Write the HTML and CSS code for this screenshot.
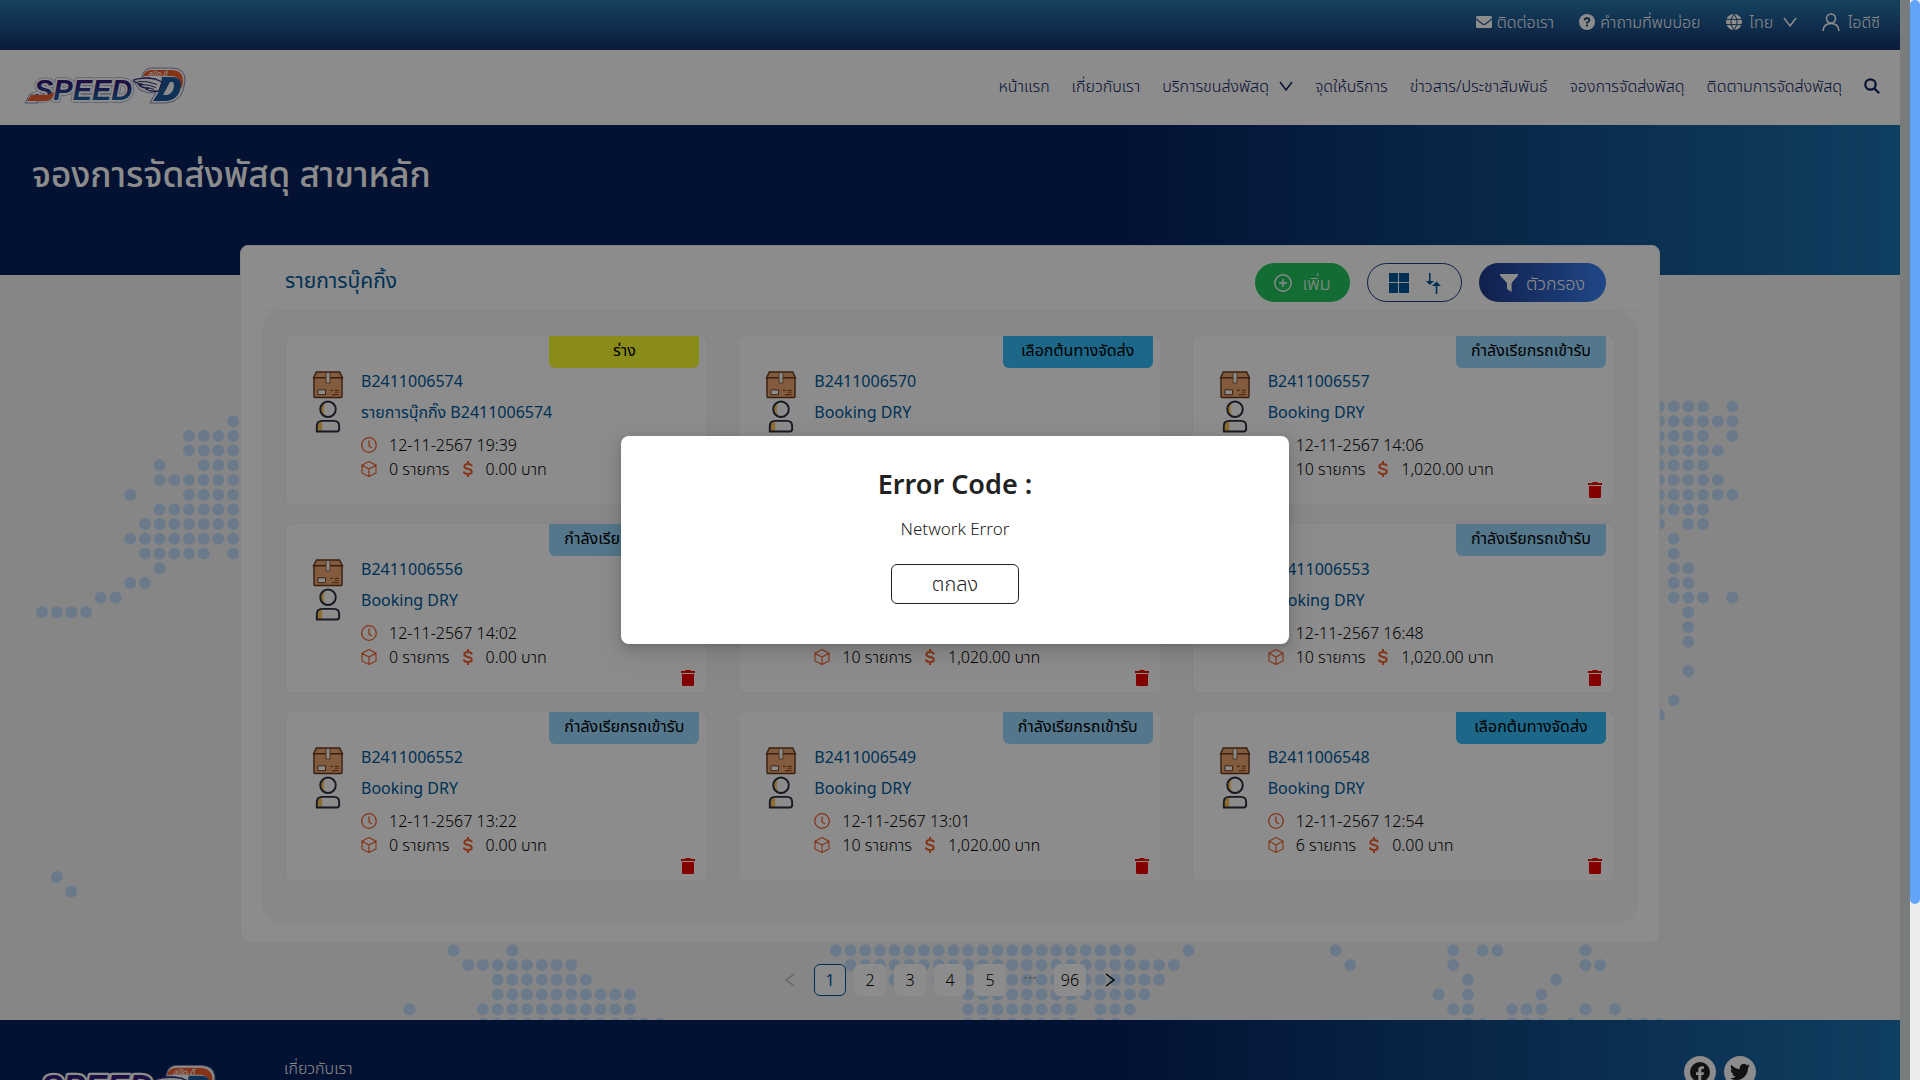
FILE: index.html
```html
<!DOCTYPE html>
<html lang="th">
<head>
<meta charset="utf-8">
<meta name="viewport" content="width=device-width, initial-scale=1">
<title>จองการจัดส่งพัสดุ</title>
<link rel="stylesheet" href="styles.css">
</head>
<body>
<svg class="sprite" aria-hidden="true">
  <symbol id="mail" viewBox="0 0 16 16"><path fill="currentColor" d="M1.500 2h13A1.500 1.500 0 0 1 16 3.500v.7L9 9.500q-1 .7-2 0L0 4.200v-.7A1.500 1.500 0 0 1 1.500 2ZM0 5.800l6.300 4.700q1.700 1.200 3.400 0L16 5.800V12.500a1.500 1.500 0 0 1-1.500 1.500h-13A1.500 1.500 0 0 1 0 12.500Z"/></symbol>
  <symbol id="help" viewBox="0 0 16 16"><circle cx="8" cy="8" r="8" fill="currentColor"/><path fill="none" stroke="#17385c" stroke-width="1.700" d="M5.500 6.400Q5.600 4.200 8 4.200q2.400.1 2.500 2.100Q10.400 7.600 8 8.500v1"/><circle cx="8" cy="11.600" r="1.100" fill="#17385c"/></symbol>
  <symbol id="globe" viewBox="0 0 16 16"><circle cx="8" cy="8" r="8" fill="currentColor"/><path fill="none" stroke="#1c4f80" stroke-width="1" d="M0 5.400h16M0 10.600h16M8 0Q1.800 8 8 16M8 0q6.200 8 0 16"/></symbol>
  <symbol id="down" viewBox="0 0 14 14"><path fill="none" stroke="currentColor" stroke-width="1.500" d="M1 3l6 8 6-8"/></symbol>
  <symbol id="person" viewBox="0 0 18 18"><g fill="none" stroke="currentColor" stroke-width="1.600"><circle cx="9" cy="5.500" r="4.500"/><path d="M1 18q.5-7.500 8-7.500t8 7.500"/></g></symbol>
  <symbol id="search" viewBox="0 0 16 16"><g fill="none" stroke="currentColor" stroke-width="2.200"><circle cx="6.500" cy="6.500" r="5.200"/><path d="M10.200 10.200l5 5"/></g></symbol>
  <symbol id="plus" viewBox="0 0 18 18"><g fill="none" stroke="currentColor" stroke-width="1.400"><circle cx="9" cy="9" r="8.200"/><path d="M9 5v8M5 9h8"/></g></symbol>
  <symbol id="grid" viewBox="0 0 20 20"><path fill="currentColor" d="M0 0h9v9H0zM10 0h10v9H10zM0 10h9v10H0zM10 10h10v10H10z"/></symbol>
  <symbol id="sort" viewBox="0 0 15 22"><path fill="currentColor" d="M3 1h1.600v8H8L3.800 13 0 9h3zM9.700 22h1.600v-8H15l-4.500-4.500L6 14h3.700z"/></symbol>
  <symbol id="funnel" viewBox="0 0 18 18"><path fill="currentColor" d="M0 0h18v1.500L11.600 9v9L7 15V9L0 1.500z"/></symbol>
  <symbol id="parcel" viewBox="0 0 32 30"><path d="M4 1h24l3 6H1z" fill="#eaa670" stroke="#6b3a1e" stroke-width="1.500"/><path d="M1.500 7h29v19q0 1.500-1.500 1.500H3Q1.500 27.500 1.500 26z" fill="#eea873" stroke="#6b3a1e" stroke-width="1.500"/><path d="M14 1.500h4v11h-4z" fill="#fff" stroke="#8e5c34" stroke-width="1"/><path d="M5.500 19.500h8v5h-8z" fill="#fff" stroke="#6b3a1e"/><path d="M18 20h3m2 0h4M23 22h4m-7 2.500h7" stroke="#9b4a22" stroke-width="1.200" fill="none"/></symbol>
  <symbol id="avatar" viewBox="0 0 26 34"><path d="M10 2.500Q5 4.500 5 9.500T10 16q-3-6 0-13.500M7 22q-5 0-5 5v5h5z" fill="#ffc95c"/><g fill="none" stroke="#2b303f" stroke-width="2"><ellipse cx="13" cy="9.500" rx="8" ry="8"/><path d="M1.500 32.500V27q0-5.500 5.500-5.500h12q5.500 0 5.500 5.500v3q0 2.500-2.500 2.500z"/></g></symbol>
  <symbol id="clock" viewBox="0 0 16 16"><g fill="none" stroke="currentColor" stroke-width="1.300"><circle cx="8" cy="8" r="7.300"/><path d="M8 3.500V9l3 2"/></g></symbol>
  <symbol id="cube" viewBox="0 0 16 16"><path fill="none" stroke="currentColor" stroke-width="1.100" d="M8 .6l7 3.600v7.800l-7 3.500-7-3.500V4.200zM1 4.200l7 3.800 7-3.800M8 8v7.500"/></symbol>
  <symbol id="dollar" viewBox="0 0 10 16"><path fill="none" stroke="currentColor" stroke-width="2" d="M5 0v3M5 13v3M9 5.200Q8.300 3 5 3T1.300 5.300Q1.300 7.300 5 8t3.800 2.700Q8.700 13 5 13T.7 10.500"/></symbol>
  <symbol id="trash" viewBox="0 0 14 16"><path fill="currentColor" d="M0 1h4l1-1h4l1 1h4v2H0zM1 4h12v10.500Q13 16 11.500 16h-9Q1 16 1 14.500z"/></symbol>
  <symbol id="facebook" viewBox="0 0 20 20"><circle cx="10" cy="10" r="10" fill="#222"/><path fill="#fff" d="M8.300 20v-7H6v-2.800h2.300V8q0-3.700 3.700-3.700l2 .2v2.300h-1.200q-1.500 0-1.500 1.500v1.900h2.600L13.400 13h-2.100v7z"/></symbol>
  <symbol id="twitter" viewBox="0 0 24 24"><path fill="#222" d="M23.950 4.570a10 10 0 0 1-2.820.77 4.960 4.960 0 0 0 2.160-2.720c-.95.550-2 .95-3.130 1.180a4.920 4.920 0 0 0-8.380 4.480C7.690 8.090 4.070 6.130 1.640 3.160a4.820 4.820 0 0 0-.67 2.480c0 1.710.87 3.210 2.190 4.100a4.900 4.900 0 0 1-2.230-.62v.06a4.920 4.920 0 0 0 3.950 4.830 5 5 0 0 1-2.210.08 4.940 4.940 0 0 0 4.600 3.420A9.870 9.870 0 0 1 0 19.540a13.990 13.990 0 0 0 7.550 2.210c9.050 0 14-7.500 14-13.980 0-.21 0-.42-.02-.63a9.940 9.940 0 0 0 2.460-2.550z"/></symbol>
  <symbol id="wing-d" viewBox="0 0 162 38">
    <path d="M118 10q2-9 9-9h21q13 0 13 12-1 22-19 23h-16l6-11-8 1-8-3-7-9 10-3h8z" fill="#fff" stroke="#8a8cb8" stroke-width="1" stroke-linejoin="round"/>
    <path d="M119 9q2-6 8-6h20q12 0 12 11 0 5-2 8 1-12-9-13z" fill="#f1602c"/>
    <path fill-rule="evenodd" d="M138 10h10q9 0 9 8-1 14-14 16h-14l7-11zM146 15l-7 13h4q6-1 7-9 0-4-2-4z" fill="#1d5a9b"/>
    <path d="M109 13q10-3 22-1l7 3-3 9q-9 1-13-2l3-1q-7 0-10-3l4-.5q-6-.5-10-4.500" fill="#fff" stroke="#2b2f78" stroke-width="1.300"/>
    <path d="M114 14.500q9-1 19 3M118 17.500q7 0 14 3M123 21q4 0 7 1.500" stroke="#2b2f78" fill="none"/>
  </symbol>
</svg>

<div class="screen">
  <div class="page">
    <div class="topbar">
      <a href="#"><svg class="i16"><use href="#mail"/></svg>ติดต่อเรา</a>
      <a href="#"><svg class="i16"><use href="#help"/></svg>คำถามที่พบบ่อย</a>
      <button type="button" class="lang"><svg class="i16"><use href="#globe"/></svg>ไทย<svg class="i14"><use href="#down"/></svg></button>
      <a href="#" class="account"><svg class="i18"><use href="#person"/></svg>ไอดีซี</a>
    </div>
    <header class="navbar">
      <a href="#" class="brand" aria-label="Speed-D">
        <svg class="brand-logo" viewBox="0 0 162 38">
          <defs><linearGradient id="ink" x1="0" y1="0" x2="0" y2="1"><stop offset=".3" stop-color="#321b78"/><stop offset=".9" stop-color="#1a6fae"/></linearGradient></defs>
          <path d="M1 36l5-9h12l-4 9z" fill="#fff" stroke="#8a8cb8"/>
          <text x="10" y="33" class="logo-word logo-edge">SPEED</text>
          <text x="10" y="33" class="logo-word logo-rim">SPEED</text>
          <text x="10" y="33" class="logo-word" fill="url(#ink)">SPEED</text>
          <path d="M3 34l4-6h16l7-3q0 8-8 9z" fill="#f1602c"/>
          <use href="#wing-d"/>
          <text x="124" y="9" class="logo-tag">สปีด-ดี</text>
        </svg>
      </a>
      <nav>
        <a href="#">หน้าแรก</a>
        <a href="#">เกี่ยวกับเรา</a>
        <a href="#">บริการขนส่งพัสดุ<svg class="i14"><use href="#down"/></svg></a>
        <a href="#">จุดให้บริการ</a>
        <a href="#">ข่าวสาร/ประชาสัมพันธ์</a>
        <a href="#">จองการจัดส่งพัสดุ</a>
        <a href="#">ติดตามการจัดส่งพัสดุ</a>
        <button type="button" aria-label="ค้นหา"><svg class="i16"><use href="#search"/></svg></button>
      </nav>
    </header>
    <div class="banner"><h1>จองการจัดส่งพัสดุ สาขาหลัก</h1></div>

    <main>
      <svg class="dots" viewBox="0 0 1900 745" preserveAspectRatio="xMidYMin slice" aria-hidden="true">
        <path transform="translate(42 131.500) scale(14.700)" d="M13 1h.1M10 2h3.100M10 3h3.100M8 4h.1M11 4h2.100M8 5h5.100M6 6h.1M10 6h3.100M8 7h5.100M7 8h6.100M6 9h7.100M7 10h4.100M13 10h.1M8 11h.1M6 12h1.100M4 13h1.100M0 14h3.100M1 32h.1M2 33h.1
        M110 0h3.100M115 0h.1M110 1h5.100M110 2h3.100M115 2h.1M110 3h4.100M110 4h3.100M110 5h4.100M110 6h5.100M110 7h3.100M110 8h.1M112 8h1.100M111 9h.1M111 10h.1M111 11h1.100M111 12h1.100M111 13h2.100M115 13h.1M112 14h.1M112 15h.1M112 16h.1M112 18h.1M111 20h.1M110 21h.1
        M28 37h.1M32 37h.1M29 38h7.100M31 39h6.100M31 40h9.100M25 41h.1M30 41h10.100M30 42h12.100
        M54 37h20.100M78 37h.1M55 38h22.100M58 39h.1M61 39h15.100M63 40h12.100M63 41h7.100M72 41h2.100M63 42h7.100M72 42h1.100
        M88 37h.1M96 37h.1M98 37h1.100M105 37h.1M89 38h.1M96 38h.1M105 38h1.100M97 39h.1M103 39h.1M95 40h.1M97 40h.1M102 40h.1M96 41h1.100M100 41h2.100M105 41h.1M107 41h.1M97 42h1.100M100 42h2.100M104 42h.1M108 42h2.100"/>
      </svg>

      <section class="panel">
        <div class="panel-head">
          <h2>รายการบุ๊คกิ้ง</h2>
          <div class="actions">
            <button type="button" class="pill add"><svg class="i18"><use href="#plus"/></svg>เพิ่ม</button>
            <button type="button" class="pill view" aria-label="มุมมอง"><svg class="i20"><use href="#grid"/></svg><svg class="sort"><use href="#sort"/></svg></button>
            <button type="button" class="pill filter"><svg class="i18"><use href="#funnel"/></svg>ตัวกรอง</button>
          </div>
        </div>
        <div class="board">
          <article class="card">
            <span class="tag draft">ร่าง</span>
            <div class="pics"><svg class="parcel"><use href="#parcel"/></svg><svg class="avatar"><use href="#avatar"/></svg></div>
            <div class="info">
              <a href="#">B2411006574</a><a href="#">รายการบุ๊กกิ๊ง B2411006574</a>
              <p><svg class="i16"><use href="#clock"/></svg>12-11-2567 19:39</p>
              <p><svg class="i16"><use href="#cube"/></svg>0 รายการ<svg class="dollar"><use href="#dollar"/></svg>0.00 บาท</p>
            </div>
            <button type="button" class="del" aria-label="ลบ"><svg><use href="#trash"/></svg></button>
          </article>
          <article class="card">
            <span class="tag origin">เลือกต้นทางจัดส่ง</span>
            <div class="pics"><svg class="parcel"><use href="#parcel"/></svg><svg class="avatar"><use href="#avatar"/></svg></div>
            <div class="info">
              <a href="#">B2411006570</a><a href="#">Booking DRY</a>
            </div>
            <button type="button" class="del" aria-label="ลบ"><svg><use href="#trash"/></svg></button>
          </article>
          <article class="card">
            <span class="tag">กำลังเรียกรถเข้ารับ</span>
            <div class="pics"><svg class="parcel"><use href="#parcel"/></svg><svg class="avatar"><use href="#avatar"/></svg></div>
            <div class="info">
              <a href="#">B2411006557</a><a href="#">Booking DRY</a>
              <p><svg class="i16"><use href="#clock"/></svg>12-11-2567 14:06</p>
              <p><svg class="i16"><use href="#cube"/></svg>10 รายการ<svg class="dollar"><use href="#dollar"/></svg>1,020.00 บาท</p>
            </div>
            <button type="button" class="del" aria-label="ลบ"><svg><use href="#trash"/></svg></button>
          </article>
          <article class="card">
            <span class="tag">กำลังเรียกรถเข้ารับ</span>
            <div class="pics"><svg class="parcel"><use href="#parcel"/></svg><svg class="avatar"><use href="#avatar"/></svg></div>
            <div class="info">
              <a href="#">B2411006556</a><a href="#">Booking DRY</a>
              <p><svg class="i16"><use href="#clock"/></svg>12-11-2567 14:02</p>
              <p><svg class="i16"><use href="#cube"/></svg>0 รายการ<svg class="dollar"><use href="#dollar"/></svg>0.00 บาท</p>
            </div>
            <button type="button" class="del" aria-label="ลบ"><svg><use href="#trash"/></svg></button>
          </article>
          <article class="card">
            <div class="pics"></div>
            <div class="info low">
              <p><svg class="i16"><use href="#cube"/></svg>10 รายการ<svg class="dollar"><use href="#dollar"/></svg>1,020.00 บาท</p>
            </div>
            <button type="button" class="del" aria-label="ลบ"><svg><use href="#trash"/></svg></button>
          </article>
          <article class="card">
            <span class="tag">กำลังเรียกรถเข้ารับ</span>
            <div class="pics"><svg class="parcel"><use href="#parcel"/></svg><svg class="avatar"><use href="#avatar"/></svg></div>
            <div class="info">
              <a href="#">B2411006553</a><a href="#">Booking DRY</a>
              <p><svg class="i16"><use href="#clock"/></svg>12-11-2567 16:48</p>
              <p><svg class="i16"><use href="#cube"/></svg>10 รายการ<svg class="dollar"><use href="#dollar"/></svg>1,020.00 บาท</p>
            </div>
            <button type="button" class="del" aria-label="ลบ"><svg><use href="#trash"/></svg></button>
          </article>
          <article class="card">
            <span class="tag">กำลังเรียกรถเข้ารับ</span>
            <div class="pics"><svg class="parcel"><use href="#parcel"/></svg><svg class="avatar"><use href="#avatar"/></svg></div>
            <div class="info">
              <a href="#">B2411006552</a><a href="#">Booking DRY</a>
              <p><svg class="i16"><use href="#clock"/></svg>12-11-2567 13:22</p>
              <p><svg class="i16"><use href="#cube"/></svg>0 รายการ<svg class="dollar"><use href="#dollar"/></svg>0.00 บาท</p>
            </div>
            <button type="button" class="del" aria-label="ลบ"><svg><use href="#trash"/></svg></button>
          </article>
          <article class="card">
            <span class="tag">กำลังเรียกรถเข้ารับ</span>
            <div class="pics"><svg class="parcel"><use href="#parcel"/></svg><svg class="avatar"><use href="#avatar"/></svg></div>
            <div class="info">
              <a href="#">B2411006549</a><a href="#">Booking DRY</a>
              <p><svg class="i16"><use href="#clock"/></svg>12-11-2567 13:01</p>
              <p><svg class="i16"><use href="#cube"/></svg>10 รายการ<svg class="dollar"><use href="#dollar"/></svg>1,020.00 บาท</p>
            </div>
            <button type="button" class="del" aria-label="ลบ"><svg><use href="#trash"/></svg></button>
          </article>
          <article class="card">
            <span class="tag origin">เลือกต้นทางจัดส่ง</span>
            <div class="pics"><svg class="parcel"><use href="#parcel"/></svg><svg class="avatar"><use href="#avatar"/></svg></div>
            <div class="info">
              <a href="#">B2411006548</a><a href="#">Booking DRY</a>
              <p><svg class="i16"><use href="#clock"/></svg>12-11-2567 12:54</p>
              <p><svg class="i16"><use href="#cube"/></svg>6 รายการ<svg class="dollar"><use href="#dollar"/></svg>0.00 บาท</p>
            </div>
            <button type="button" class="del" aria-label="ลบ"><svg><use href="#trash"/></svg></button>
          </article>
        </div>
      </section>

      <nav class="pager" aria-label="หน้า">
        <button type="button" class="arrow" disabled aria-label="ก่อนหน้า"><svg class="i14 left"><use href="#down"/></svg></button>
        <button type="button" class="current">1</button>
        <button type="button">2</button>
        <button type="button">3</button>
        <button type="button">4</button>
        <button type="button">5</button>
        <span class="more">•••</span>
        <button type="button">96</button>
        <button type="button" class="arrow" aria-label="ถัดไป"><svg class="i14 right"><use href="#down"/></svg></button>
      </nav>
    </main>

    <footer>
      <svg class="footer-logo" viewBox="0 0 162 38">
        <text x="8" y="30" class="logo-word logo-rim">SPEED</text>
        <text x="8" y="30" class="logo-word" fill="url(#ink)">SPEED</text>
        <path d="M3 34l4-6h16l7-3q0 8-8 9z" fill="#f1602c"/>
        <use href="#wing-d"/>
        <text x="124" y="9" class="logo-tag">สปีด-ดี</text>
      </svg>
      <a href="#" class="about">เกี่ยวกับเรา</a>
      <div class="social">
        <a href="#" aria-label="Facebook"><svg class="i20"><use href="#facebook"/></svg></a>
        <a href="#" aria-label="Twitter"><svg class="i20"><use href="#twitter"/></svg></a>
      </div>
    </footer>
  </div>
  <div class="inner-bar"></div>
  <div class="outer-bar"><div class="thumb"></div></div>

  <div class="overlay">
    <div class="modal" role="dialog" aria-modal="true" aria-labelledby="err">
      <h2 id="err">Error Code :</h2>
      <p>Network Error</p>
      <button type="button">ตกลง</button>
    </div>
  </div>
</div>
</body>
</html>
```
FILE: styles.css
```css
* { box-sizing: border-box; }
body {
  margin: 0;
  font: 300 16px/24px "Noto Sans", "Noto Sans Thai", sans-serif;
  color: #000;
}
h1, h2, p { margin: 0; }
a { color: inherit; text-decoration: none; }
button { font: inherit; color: inherit; background: none; border: 0; padding: 0; }
svg { display: block; flex: none; }
.sprite { position: absolute; width: 0; height: 0; }
.i14 { width: 14px; height: 14px; }
.i16 { width: 16px; height: 16px; }
.i18 { width: 18px; height: 18px; }
.i20 { width: 20px; height: 20px; }

.screen {
  position: relative;
  display: grid;
  grid-template-columns: minmax(0, 1fr) 10px 10px;
  height: 100vh;
  overflow: hidden;
}
.page { overflow: hidden; background: #f5f5f5; }

.topbar {
  display: flex;
  justify-content: flex-end;
  align-items: center;
  gap: 25px;
  height: 50px;
  padding: 0 20px 6px;
  color: #fff;
  background: linear-gradient(#267aae, #162f6d);
}
.topbar a, .lang { display: flex; align-items: center; gap: 5px; }
.topbar .lang, .topbar .account { gap: 8px; }
.lang svg:last-child { margin-left: 2px; }

.navbar {
  display: flex;
  justify-content: space-between;
  align-items: center;
  height: 75px;
  padding: 0 20px 4px 24px;
  color: #0d2060;
  background: #fff;
}
.brand-logo { width: 162px; height: 38px; }
.logo-word { font: italic 700 29px "Liberation Sans", sans-serif; }
.logo-edge, .logo-rim { stroke-linejoin: round; }
.logo-edge { stroke: #8a8cb8; stroke-width: 5px; }
.logo-rim { stroke: #fff; stroke-width: 4px; }
.logo-tag { font: italic 500 7px "Noto Sans", "Noto Sans Thai", sans-serif; fill: #fff; }
.navbar nav { display: flex; align-items: center; gap: 22px; }
.navbar nav a { display: flex; align-items: center; gap: 10px; }

.banner {
  height: 150px;
  padding: 23px 32px;
  color: #fff;
  background: linear-gradient(90deg, #061f5d 58%, #1b73b0);
}
.banner h1 { font-size: 35px; font-weight: 500; line-height: 52px; }

main { display: flow-root; position: relative; padding: 0 240px 24px; }
.dots { position: absolute; top: 0; left: 0; width: 100%; height: 100%; }
.dots path {
  fill: none;
  stroke: #c3dffd;
  stroke-width: .82;
  stroke-linecap: round;
  stroke-dasharray: 0 1;
}

.panel {
  position: relative;
  margin-top: -30px;
  padding: 0 20px 18px;
  border: 1px solid #f0f0f0;
  border-radius: 8px;
  background: #fff;
}
.panel-head {
  display: flex;
  justify-content: space-between;
  align-items: center;
  height: 65px;
  padding: 9px 33px 0 24px;
  border-bottom: 1px solid #f0f0f0;
}
.panel-head h2 { padding-bottom: 5px; font-size: 21px; font-weight: 400; color: #005a9c; }
.actions { display: flex; gap: 17px; }
.pill {
  display: flex;
  justify-content: center;
  align-items: center;
  gap: 10px;
  height: 39px;
  border-radius: 20px;
  font-size: 18px;
  color: #fff;
}
.add { width: 95px; background: #22c55e; }
.view { width: 95px; gap: 17px; border: 1px solid #1e3a8a; color: #005a9c; }
.sort { width: 15px; height: 22px; }
.filter { width: 127px; gap: 8px; background: linear-gradient(90deg, #1e3a8a, #3b82f6); }

.board {
  display: grid;
  grid-template-columns: repeat(3, minmax(0, 1fr));
  gap: 17px 30px;
  padding: 24px 24px 42px;
  border-radius: 24px;
  background: #f7f7f7;
}
.card {
  position: relative;
  display: flex;
  gap: 17px;
  height: 171px;
  padding: 33px 26px 0;
  border: 1px solid #f0f0f0;
  border-radius: 8px;
  background: #fff;
}
.tag {
  position: absolute;
  top: 0;
  right: 8px;
  width: 150px;
  height: 32px;
  border-radius: 0 0 6px 6px;
  line-height: 29px;
  text-align: center;
  font-weight: 400;
  background: #99d9ff;
}
.tag.draft { background: #f9ff2e; }
.tag.origin { background: #36bdf8; }
.pics { display: flex; flex-direction: column; align-items: center; width: 32px; padding-top: 2px; }
.parcel { width: 32px; height: 29px; }
.avatar { width: 26px; height: 33px; }
.info { display: flex; flex-direction: column; }
.info a { height: 31px; font-weight: 400; color: #005a9c; }
.info p { display: flex; align-items: center; gap: 12px; height: 24px; }
.info a + p { margin-top: 2px; }
.info p svg { color: #f1602c; }
.info.low { padding-top: 88px; }
.info .dollar { width: 12px; height: 16px; }
.del { position: absolute; right: 12px; bottom: 7px; color: #f00000; }
.del svg { width: 14px; height: 16px; }

.pager {
  position: relative;
  display: flex;
  justify-content: center;
  gap: 8px;
  padding-top: 21px;
}
.pager button {
  width: 32px;
  height: 32px;
  border-radius: 6px;
  background: #fff;
}
.pager .current { border: 1px solid #005a9c; font-weight: 400; color: #005a9c; }
.pager .arrow { display: grid; place-items: center; background: none; }
.pager .arrow:disabled { color: #bbb; }
.left { transform: rotate(90deg); }
.right { transform: rotate(-90deg); }
.more { width: 32px; font-size: 12px; line-height: 28px; text-align: center; color: #999; }

footer {
  display: flex;
  padding: 36px 144px 60px 32px;
  color: #fff;
  background: linear-gradient(90deg, #061f5d 58%, #1b73b0);
}
.footer-logo { width: 184px; height: 60px; }
.about { margin-left: 68px; }
.social { display: flex; gap: 8px; margin-left: auto; }
.social a {
  display: grid;
  place-items: center;
  width: 32px;
  height: 32px;
  border-radius: 50%;
  background: #fff;
}

.inner-bar { background: #dde2e2; }
.outer-bar { background: #ececec; }
.thumb { height: 83.7vh; border-radius: 5px; background: #60a5fa; }

.overlay {
  position: absolute;
  inset: 0 10px 0 0;
  display: grid;
  place-items: center;
  background: rgba(0, 0, 0, .45);
}
.modal {
  display: flex;
  flex-direction: column;
  align-items: center;
  width: 668px;
  max-width: 90%;
  padding: 28px 24px 40px;
  border-radius: 8px;
  color: #222;
  background: #fff;
  box-shadow: 0 6px 16px rgba(0, 0, 0, .08), 0 3px 6px rgba(0, 0, 0, .12), 0 9px 28px 8px rgba(0, 0, 0, .05);
}
.modal h2 { font-size: 27px; font-weight: 600; line-height: 40px; }
.modal p { margin: 13px 0 23px; font-size: 17px; }
.modal button {
  width: 128px;
  height: 40px;
  border: 1px solid #222;
  border-radius: 6px;
  font-size: 20px;
}
```
